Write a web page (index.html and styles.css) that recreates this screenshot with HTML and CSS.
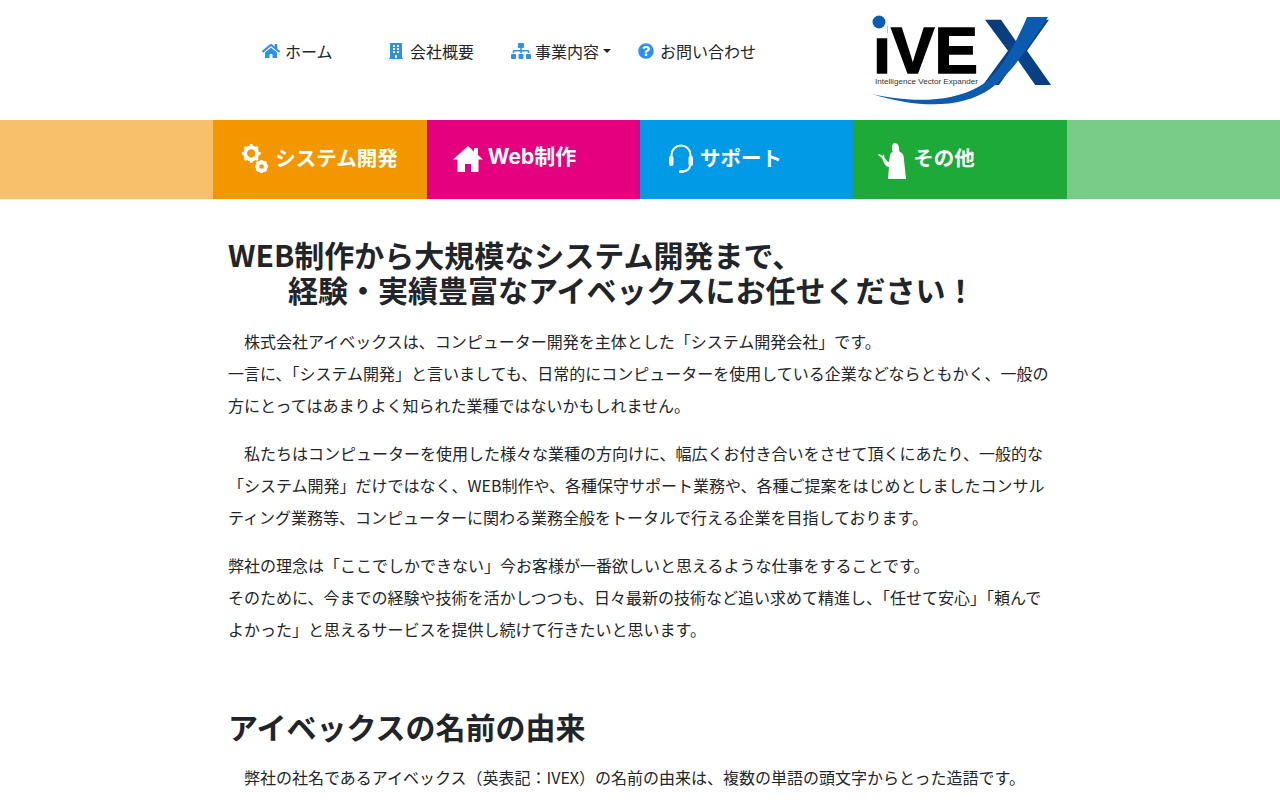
FILE: index.html
```html
<!DOCTYPE html>
<html lang="ja">
<head>
<meta charset="utf-8">
<title>株式会社アイベックス</title>
<link rel="stylesheet" href="styles.css">
</head>
<body>
<header class="header">
  <nav class="nav">
    <a class="nav-item nav-home"><svg class="ico" viewBox="0 0 576 512"><path d="M280 148 96 300v164a16 16 0 0 0 16 16l112-.3a16 16 0 0 0 16-16V368a16 16 0 0 1 16-16h64a16 16 0 0 1 16 16v96a16 16 0 0 0 16 16l112 .3a16 16 0 0 0 16-16V300L296 148a12 12 0 0 0-16 0zM572 251l-84-69V44a12 12 0 0 0-12-12h-56a12 12 0 0 0-12 12v72l-89-74a48 48 0 0 0-61 0L4 251a12 12 0 0 0-2 17l26 31a12 12 0 0 0 17 2L280 107a12 12 0 0 1 16 0l235 194a12 12 0 0 0 17-2l26-31a12 12 0 0 0-2-17z"/></svg><span>ホーム</span></a>
    <a class="nav-item nav-company"><svg class="ico ico-b" viewBox="0 0 448 512"><path d="M436 480h-20V24a24 24 0 0 0-24-24H56a24 24 0 0 0-24 24v456H12a12 12 0 0 0-12 12v20h448v-20a12 12 0 0 0-12-12zM128 76a12 12 0 0 1 12-12h40a12 12 0 0 1 12 12v40a12 12 0 0 1-12 12h-40a12 12 0 0 1-12-12zm0 96a12 12 0 0 1 12-12h40a12 12 0 0 1 12 12v40a12 12 0 0 1-12 12h-40a12 12 0 0 1-12-12zm52 148h-40a12 12 0 0 1-12-12v-40a12 12 0 0 1 12-12h40a12 12 0 0 1 12 12v40a12 12 0 0 1-12 12zm76 160h-64v-84a12 12 0 0 1 12-12h40a12 12 0 0 1 12 12zm64-172a12 12 0 0 1-12 12h-40a12 12 0 0 1-12-12v-40a12 12 0 0 1 12-12h40a12 12 0 0 1 12 12zm0-96a12 12 0 0 1-12 12h-40a12 12 0 0 1-12-12v-40a12 12 0 0 1 12-12h40a12 12 0 0 1 12 12zm0-96a12 12 0 0 1-12 12h-40a12 12 0 0 1-12-12V76a12 12 0 0 1 12-12h40a12 12 0 0 1 12 12z"/></svg><span>会社概要</span></a>
    <a class="nav-item nav-service"><svg class="ico ico-s" viewBox="0 0 640 512"><path d="M128 352H32a32 32 0 0 0-32 32v96a32 32 0 0 0 32 32h96a32 32 0 0 0 32-32v-96a32 32 0 0 0-32-32zm-24-80h192v48h48v-48h192v48h48v-57.6a38.4 38.4 0 0 0-38.4-38.4H344v-64h40a32 32 0 0 0 32-32V32a32 32 0 0 0-32-32H256a32 32 0 0 0-32 32v96a32 32 0 0 0 32 32h40v64H94.4A38.4 38.4 0 0 0 56 262.4V320h48zm264 80h-96a32 32 0 0 0-32 32v96a32 32 0 0 0 32 32h96a32 32 0 0 0 32-32v-96a32 32 0 0 0-32-32zm240 0h-96a32 32 0 0 0-32 32v96a32 32 0 0 0 32 32h96a32 32 0 0 0 32-32v-96a32 32 0 0 0-32-32z"/></svg><span>事業内容</span><i class="caret"></i></a>
    <a class="nav-item nav-contact"><svg class="ico ico-q" viewBox="0 0 512 512"><path d="M504 256c0 137-111 248-248 248S8 393 8 256 119 8 256 8s248 111 248 248zM263 90c-55 0-89 23-116 63a12 12 0 0 0 3 16l35 26a12 12 0 0 0 17-2c18-22 30-35 57-35 20 0 45 13 45 33 0 15-12 22-32 33-23 13-54 30-54 71v4a12 12 0 0 0 12 12h56a12 12 0 0 0 12-12v-1c0-29 83-30 83-106 0-57-60-102-118-102zm-7 242a46 46 0 1 0 0 92 46 46 0 0 0 0-92z"/></svg><span>お問い合わせ</span></a>
  </nav>
  <svg class="logo" viewBox="0 0 182 92">
    <defs>
      <linearGradient id="xg" x1="0" x2="1" y1="0" y2="1">
        <stop offset="0" stop-color="#0a3670"/>
        <stop offset="0.55" stop-color="#0a4488"/>
        <stop offset="1" stop-color="#053a7c"/>
      </linearGradient>
    </defs>
    <text class="logo-x" x="112" y="71" textLength="70" lengthAdjust="spacingAndGlyphs">X</text>
    <text class="logo-main" x="3" y="59" textLength="105" lengthAdjust="spacingAndGlyphs">iVE</text>
    <rect class="logo-mask" x="0" y="0" width="17" height="24"/>
    <circle class="logo-dot" cx="9" cy="8" r="6.500"/>
    <path class="logo-swoosh" d="M2 80C32 87 78 91 110 72 130 60 147 27 157 3H178C160 30 142 60 120 75 92 94 50 95 2 80Z"/>
    <text class="logo-tag" x="5" y="70" textLength="103" lengthAdjust="spacingAndGlyphs">Intelligence Vector Expander</text>
  </svg>
</header>

<div class="banner">
  <div class="band band-orange-light"></div>
  <a class="band band-orange">
    <svg class="bicon bicon-gear" viewBox="0 0 30 34">
      <g class="gear"><circle cx="11" cy="11" r="6.500"/><path d="M11 1v5M11 16v5M1 11h5M16 11h5M4 4l3.500 3.500M14.500 14.500L18 18M4 18l3.500-3.500M14.500 7.500L18 4"/></g>
      <g class="gear"><circle cx="22" cy="25" r="4.500"/><path d="M22 18v3M22 29v3M15 25h3M26 25h3M17 20l2.500 2.500M24.500 27.500L27 30M17 30l2.500-2.500M24.500 22.500L27 20"/></g>
    </svg>
    <span class="blabel">システム開発</span>
  </a>
  <a class="band band-pink">
    <svg class="bicon bicon-home" viewBox="0 0 30 26"><path d="M15 0 0 13.500h4.500V26h7.500v-8h6v8h7.500V13.500H30L25 9V2h-4v3.500z"/></svg>
    <span class="blabel blabel-web">Web制作</span>
  </a>
  <a class="band band-blue">
    <svg class="bicon bicon-head" viewBox="0 0 26 30"><path class="head-line" d="M3.500 15V11a9.500 9.500 0 0 1 19 0v4M22 21c0 4-3 6-7 6.500"/><rect class="head-fill" x="1" y="12" width="4.500" height="10" rx="2"/><rect class="head-fill" x="20.500" y="12" width="4.500" height="10" rx="2"/><rect class="head-fill" x="11" y="26" width="5" height="3" rx="1.500"/></svg>
    <span class="blabel">サポート</span>
  </a>
  <a class="band band-green">
    <svg class="bicon bicon-lady" viewBox="0 0 30 36"><path d="M17 0c3 0 5 2 5 5 0 2 0 3 1 4 3 1 4 4 4 8l2 19H11l1-12c-3 0-5-3-7-9L1 12l1-1 4 2 1-2 .5 4c2 2 3 4 4.500 4l1-7c.5-2 2-3 3-3-1-1-1-2-1-4 0-3 1-5 2.500-5z"/></svg>
    <span class="blabel">その他</span>
  </a>
  <div class="band band-green-light"></div>
</div>

<main class="main">
  <h2 class="title">WEB制作から大規模なシステム開発まで、<br>　　経験・実績豊富なアイベックスにお任せください！</h2>
  <p class="para">　株式会社アイベックスは、コンピューター開発を主体とした「システム開発会社」です。<br>一言に、「システム開発」と言いましても、日常的にコンピューターを使用している企業などならともかく、一般の方にとってはあまりよく知られた業種ではないかもしれません。</p>
  <p class="para">　私たちはコンピューターを使用した様々な業種の方向けに、幅広くお付き合いをさせて頂くにあたり、一般的な「システム開発」だけではなく、WEB制作や、各種保守サポート業務や、各種ご提案をはじめとしましたコンサルティング業務等、コンピューターに関わる業務全般をトータルで行える企業を目指しております。</p>
  <p class="para">弊社の理念は「ここでしかできない」今お客様が一番欲しいと思えるような仕事をすることです。<br>そのために、今までの経験や技術を活かしつつも、日々最新の技術など追い求めて精進し、「任せて安心」「頼んでよかった」と思えるサービスを提供し続けて行きたいと思います。</p>
  <h2 class="title title-second">アイベックスの名前の由来</h2>
  <p class="para">　弊社の社名であるアイベックス（英表記：IVEX）の名前の由来は、複数の単語の頭文字からとった造語です。</p>
</main>
</body>
</html>
```
FILE: styles.css
```css
* { box-sizing: border-box; }
html, body { margin: 0; padding: 0; }
body {
  font-family: "Noto Sans CJK JP", "Noto Sans", sans-serif;
  font-size: 16px;
  line-height: 32px;
  color: #212529;
  background: #fff;
  overflow: hidden;
}
.header {
  height: 120px;
  width: 854px;
  margin: 0 auto;
  display: flex;
  justify-content: space-between;
  align-items: flex-start;
}
.nav { display: flex; padding: 35px 0 0 49px; font-size: 16px; }
.nav-item { display: flex; align-items: center; height: 32px; color: #212529; white-space: nowrap; }
.ico { width: 18px; height: 16px; fill: #2e8ff0; margin-right: 5px; flex: none; }
.nav-home { width: 127px; }
.nav-company { width: 122px; }
.ico-b { width: 14px; margin-right: 7px; }
.nav-service { width: 127px; }
.ico-s { width: 20px; margin-right: 4px; }
.ico-q { width: 16px; margin-right: 6px; }
.caret {
  width: 0; height: 0;
  margin-left: 4px;
  border-top: 4px solid #212529;
  border-left: 4px solid transparent;
  border-right: 4px solid transparent;
}
.logo { width: 182px; height: 92px; margin: 14px 15px 0 0; flex: none; }
.logo-dot { fill: #0d5cb4; }
.logo-mask { fill: #fff; }
.logo-main { font-family: "Liberation Sans", sans-serif; font-weight: 700; font-size: 64px; fill: #000; stroke: #000; stroke-width: 1.5px; }
.logo-tag { font-family: "Liberation Sans", sans-serif; font-size: 8px; fill: #333; }
.logo-x { font-family: "Liberation Sans", sans-serif; font-weight: 700; font-size: 95px; fill: url(#xg); }
.logo-swoosh { fill: #0b5cb0; }

.banner { display: grid; grid-template-columns: repeat(6, 1fr); height: 79px; }
.band { display: flex; align-items: center; color: #fff; }
.band-orange-light { background: #f8c06a; }
.band-orange { background: #f39700; padding-left: 28px; }
.band-pink { background: #e4007f; padding-left: 26px; }
.band-blue { background: #009ae6; padding-left: 28px; }
.band-green { background: #1eaa39; padding-left: 24px; }
.band-green-light { background: #78cc88; }
.blabel { font-family: "Noto Sans CJK JP", sans-serif; font-weight: 700; font-size: 20.5px; line-height: 28px; margin: 0 0 6px 6px; white-space: nowrap; }
.blabel-web { font-family: Inter, "Noto Sans CJK JP", sans-serif; font-size: 21px; margin-left: 5px; }
.bicon { flex: none; fill: #fff; margin-bottom: 2px; }
.bicon-gear { width: 28px; height: 32px; }
.gear { fill: none; stroke: #fff; }
.gear circle { stroke-width: 4px; }
.gear path { stroke-width: 3px; }
.bicon-home { width: 30px; height: 26px; }
.bicon-head { width: 26px; height: 30px; }
.head-line { fill: none; stroke: #fff; stroke-width: 2px; }
.head-fill { fill: #fff; }
.bicon-lady { width: 30px; height: 38px; margin: 2px 0 0; }

.main { width: 854px; margin: 0 auto; padding: 38px 15px 0; }
.title { margin: 0 0 18px; font-size: 30px; line-height: 35px; font-weight: 700; color: #212529; }
.title-second { margin: 64px 0 17px; }
.para { margin: 0 0 16px; }
```
